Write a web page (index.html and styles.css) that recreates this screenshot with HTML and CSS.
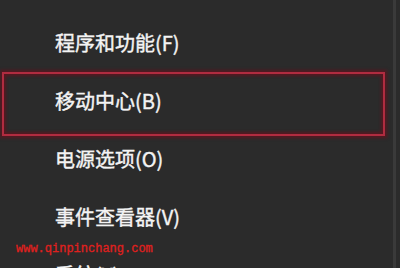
FILE: index.html
```html
<!DOCTYPE html>
<html lang="zh-CN">
<head>
<meta charset="utf-8">
<link rel="stylesheet" href="styles.css">
</head>
<body>
<div class="menu">
  <div class="item">程序和功能(F)</div>
  <div class="item selected">移动中心(B)</div>
  <div class="item">电源选项(O)</div>
  <div class="item">事件查看器(V)</div>
  <div class="item">系统(Y)</div>
</div>
<div class="watermark">www.qinpinchang.com</div>
</body>
</html>
```
FILE: styles.css
```css
html, body {
  margin: 0;
  padding: 0;
}
body {
  width: 400px;
  height: 268px;
  overflow: hidden;
  background: #2b2b2b;
  position: relative;
  font-family: "Noto Sans CJK SC", "Noto Sans", sans-serif;
}
.menu {
  display: flex;
  flex-direction: column;
  padding-top: 13px;
  border-right: 3px solid #3a3a3a;
  width: 393px;
}
.item {
  position: relative;
  height: 58px;
  display: flex;
  align-items: center;
  padding-left: 55px;
  color: #f4f4f4;
  font-size: 20px;
  -webkit-text-stroke: 0.4px #f4f4f4;
}
.selected::after {
  content: "";
  position: absolute;
  top: 1px;
  left: 2px;
  width: 379px;
  height: 60px;
  border: 2px solid #b02c40;
  box-shadow: 0 0 3px 2px rgba(100, 18, 30, 0.75), inset 0 0 3px 2px rgba(100, 18, 30, 0.75);
}
.watermark {
  position: absolute;
  left: 16px;
  top: 242px;
  font-family: "Liberation Mono", monospace;
  font-size: 12px;
  color: #e0201e;
  -webkit-text-stroke: 0.3px #e0201e;
}
```
